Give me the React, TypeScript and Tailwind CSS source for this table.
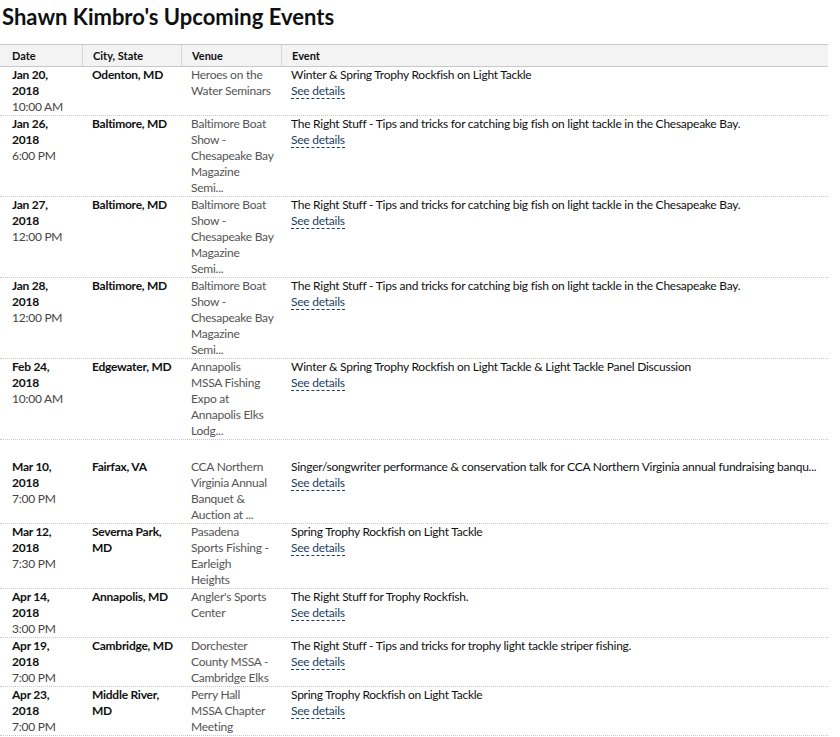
import React from "react";

type Row = {
  date: string;
  year: string;
  time: string;
  city: string[];
  venue: string[];
  event: string;
  pad?: string;
};

const rows: Row[] = [
  { date: "Jan 20,", year: "2018", time: "10:00 AM", city: ["Odenton, MD"], venue: ["Heroes on the", "Water Seminars"], event: "Winter & Spring Trophy Rockfish on Light Tackle" },
  { date: "Jan 26,", year: "2018", time: "6:00 PM", city: ["Baltimore, MD"], venue: ["Baltimore Boat", "Show -", "Chesapeake Bay", "Magazine", "Semi..."], event: "The Right Stuff - Tips and tricks for catching big fish on light tackle in the Chesapeake Bay." },
  { date: "Jan 27,", year: "2018", time: "12:00 PM", city: ["Baltimore, MD"], venue: ["Baltimore Boat", "Show -", "Chesapeake Bay", "Magazine", "Semi..."], event: "The Right Stuff - Tips and tricks for catching big fish on light tackle in the Chesapeake Bay." },
  { date: "Jan 28,", year: "2018", time: "12:00 PM", city: ["Baltimore, MD"], venue: ["Baltimore Boat", "Show -", "Chesapeake Bay", "Magazine", "Semi..."], event: "The Right Stuff - Tips and tricks for catching big fish on light tackle in the Chesapeake Bay." },
  { date: "Feb 24,", year: "2018", time: "10:00 AM", city: ["Edgewater, MD"], venue: ["Annapolis", "MSSA Fishing", "Expo at", "Annapolis Elks", "Lodg..."], event: "Winter & Spring Trophy Rockfish on Light Tackle & Light Tackle Panel Discussion" },
  { date: "Mar 10,", year: "2018", time: "7:00 PM", city: ["Fairfax, VA"], venue: ["CCA Northern", "Virginia Annual", "Banquet &", "Auction at ..."], event: "Singer/songwriter performance & conservation talk for CCA Northern Virginia annual fundraising banqu...", pad: "pt-[19px]" },
  { date: "Mar 12,", year: "2018", time: "7:30 PM", city: ["Severna Park,", "MD"], venue: ["Pasadena", "Sports Fishing -", "Earleigh", "Heights"], event: "Spring Trophy Rockfish on Light Tackle" },
  { date: "Apr 14,", year: "2018", time: "3:00 PM", city: ["Annapolis, MD"], venue: ["Angler's Sports", "Center"], event: "The Right Stuff for Trophy Rockfish." },
  { date: "Apr 19,", year: "2018", time: "7:00 PM", city: ["Cambridge, MD"], venue: ["Dorchester", "County MSSA -", "Cambridge Elks"], event: "The Right Stuff - Tips and tricks for trophy light tackle striper fishing." },
  { date: "Apr 23,", year: "2018", time: "7:00 PM", city: ["Middle River,", "MD"], venue: ["Perry Hall", "MSSA Chapter", "Meeting"], event: "Spring Trophy Rockfish on Light Tackle" },
];

export default function App() {
  return (
    <div className="w-[840px] h-[737px] overflow-hidden bg-white text-[#0f1111]" style={{ fontFamily: "Lato, 'Noto Sans', sans-serif" }}>
      <h1 className="pl-[2px] pt-[3px] h-[44px] text-[22px] leading-[28px] font-bold text-[#0f1111]">
        Shawn Kimbro's Upcoming Events
      </h1>
      <div className="w-[828px]">
        <div className="grid grid-cols-[82px_99px_100px_547px] h-[23px] bg-[#f3f3f3] border-t border-b border-[#c8c8c8] text-[11px] font-bold leading-[21px]">
          <div className="pl-[12px]">Date</div>
          <div className="pl-[10px] border-l border-[#d5d5d5]">City, State</div>
          <div className="pl-[10px] border-l border-[#d5d5d5]">Venue</div>
          <div className="pl-[10px] border-l border-[#d5d5d5]">Event</div>
        </div>
        {rows.map((r, i) => (
          <div key={i} className={`grid grid-cols-[82px_99px_100px_547px] border-b border-dotted border-[#c6c6c6] text-[12px] tracking-[-0.25px] leading-[16px] whitespace-nowrap ${r.pad ?? ""}`}>
            <div className="pl-[12px]">
              <div className="font-bold">{r.date}</div>
              <div className="font-bold">{r.year}</div>
              <div className="text-[#444]">{r.time}</div>
            </div>
            <div className="pl-[10px] font-bold">
              {r.city.map((c, j) => (
                <div key={j}>{c}</div>
              ))}
            </div>
            <div className="pl-[10px] text-[#555]">
              {r.venue.map((v, j) => (
                <div key={j}>{v}</div>
              ))}
            </div>
            <div className="pl-[10px]">
              <div>{r.event}</div>
              <div>
                <span className="text-[#1a3f66] border-b border-dashed border-[#1a3f66]">See details</span>
              </div>
            </div>
          </div>
        ))}
      </div>
    </div>
  );
}
